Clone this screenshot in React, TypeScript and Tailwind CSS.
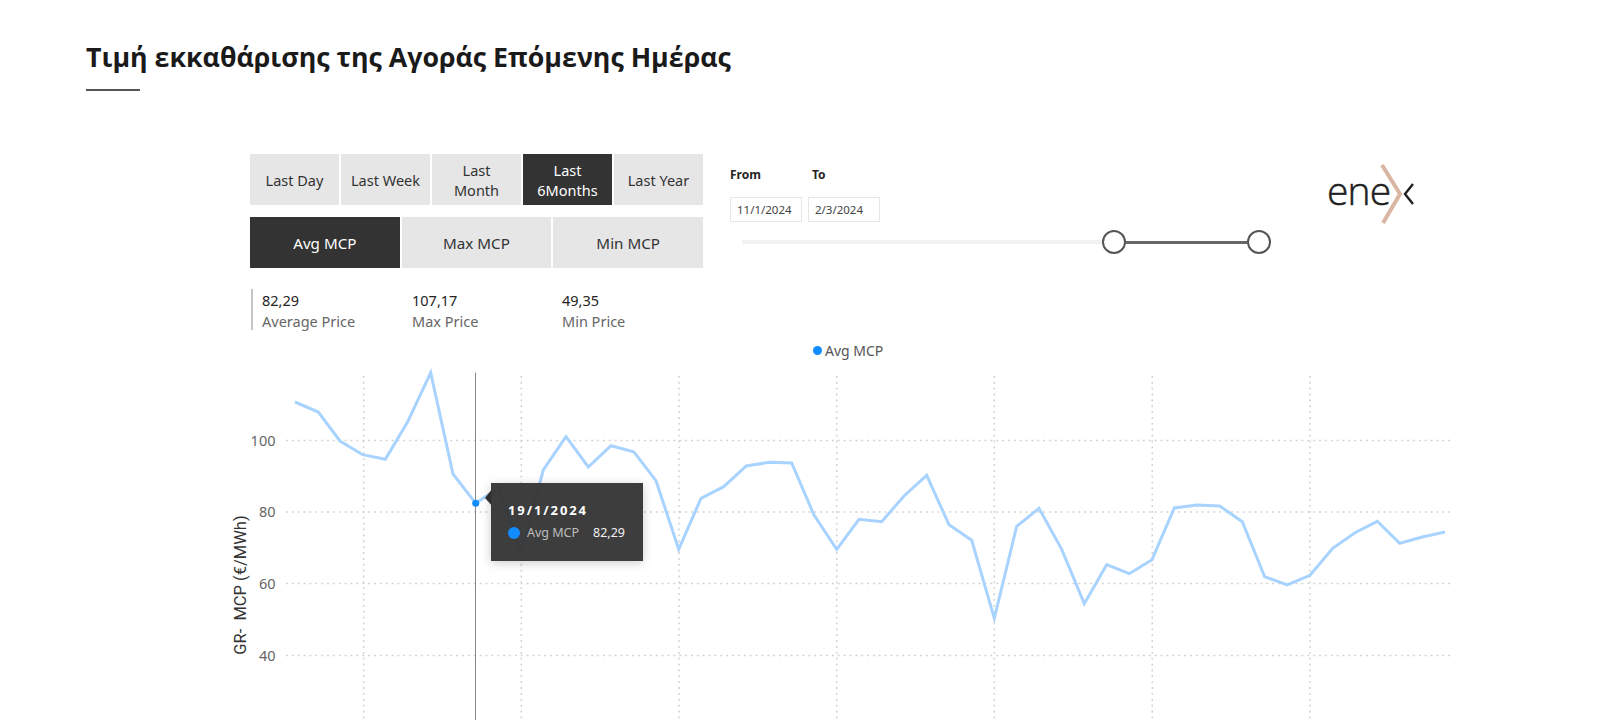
const points: [number, number][] = [
  [295, 402], [318.3, 412], [340, 441], [362.7, 454.7], [385.3, 459.3], [407.7, 421.7], [430.7, 372.7], [453, 474], [475.7, 503.3],
  [498.3, 488], [520.9, 553], [543.3, 470], [566, 436.7], [588.3, 467], [611, 445.7], [633.7, 451.7], [656, 480.7], [678.7, 549.3],
  [701, 498.3], [723.7, 486.7], [746.3, 466], [769, 462.3], [791.7, 463], [814, 515], [836.7, 549.3], [859, 519.3], [881.7, 521.7],
  [904, 496], [926.7, 475.3], [949, 524.7], [971.7, 540.3], [994.3, 618.3], [1016.7, 526.3], [1039, 508.3], [1061.7, 549.3],
  [1084.3, 603.7], [1106.7, 564.7], [1129.3, 573.7], [1152, 559.7], [1174.3, 508], [1197, 505], [1219.7, 506], [1242.3, 521.7],
  [1264.7, 576.7], [1287.3, 585], [1310, 575.3], [1332.7, 548.3], [1355, 532.7], [1377.3, 521.3], [1399.7, 543.3], [1422.3, 537], [1445, 532],
];

const rows = [
  { y: 440.5, label: "100" },
  { y: 512, label: "80" },
  { y: 583.5, label: "60" },
  { y: 655.5, label: "40" },
];
const columns = [363.7, 521.3, 679, 836.7, 994.3, 1152.3, 1310];

function PeriodButton({ label, active, large }: { label: string; active?: boolean; large?: boolean }) {
  return (
    <div
      className={`flex items-center justify-center px-[8px] text-center leading-[20px] ${large ? "text-[15.2px]" : "text-[14.5px]"} ${
        active ? "bg-[#333333] text-white" : "bg-[#e6e6e6] text-[#333333]"
      }`}
    >
      {label}
    </div>
  );
}

function Stat({ value, label }: { value: string; label: string }) {
  return (
    <div className="w-[150px] shrink-0 text-[14.5px] leading-[21px]">
      <div className="text-[#252423]">{value}</div>
      <div className="text-[#666666]">{label}</div>
    </div>
  );
}

function Logo() {
  return (
    <svg width="92" height="62" viewBox="1326 163 92 62" className="mt-[9px] ml-[55px]">
      <text
        x="1327"
        y="205"
        fontSize="39"
        fontFamily="'Open Sans', sans-serif"
        fontWeight="300"
        letterSpacing="-0.8"
        fill="#1f1f1f"
        stroke="#1f1f1f"
        strokeWidth="0.5"
      >
        ene
      </text>
      <path d="M1382 165 L1400 194 L1383 223" fill="none" stroke="#d9b5a3" strokeWidth="4" />
      <path d="M1413 184 L1405 194 L1413 204" fill="none" stroke="#1f1f1f" strokeWidth="2.4" />
    </svg>
  );
}

function Chart() {
  return (
    <div className="relative ml-[220px] w-[1240px] h-[359px]">
      <svg width="1240" height="359" viewBox="220 361 1240 359" className="block">
        {rows.map((r) => (
          <line key={r.y} x1="286" x2="1453" y1={r.y} y2={r.y} stroke="#cfcfcf" strokeWidth="1.5" strokeDasharray="1.8 4.07" />
        ))}
        {columns.map((x) => (
          <line key={x} x1={x} x2={x} y1="376" y2="720" stroke="#cfcfcf" strokeWidth="1.5" strokeDasharray="1.8 4.07" />
        ))}
        {rows.map((r) => (
          <text key={r.label} x="275.5" y={r.y + 5} textAnchor="end" fontSize="14.5" fontFamily="'Noto Sans', sans-serif" fill="#666666">
            {r.label}
          </text>
        ))}
        <text
          transform="translate(245.5 585) rotate(-90)"
          textAnchor="middle"
          fontSize="16.5"
          fontFamily="Roboto, sans-serif"
          fill="#333333"
        >
          {"GR-\u00a0 MCP (€/MWh)"}
        </text>
        <polyline points={points.map((p) => p.join(",")).join(" ")} fill="none" stroke="#a9d3ff" strokeWidth="3" strokeLinejoin="miter" />
        <line x1="475.5" x2="475.5" y1="372.7" y2="720" stroke="#8a8a8a" strokeWidth="1" />
        <circle cx="475.7" cy="503.3" r="3.5" fill="#118dff" />
        <polygon points="491.3,490 485,498 491.3,505" fill="#333333" />
      </svg>
      <div className="absolute left-[271px] top-[122px] w-[152px] h-[78px] bg-[#333333]/95 pt-[18px] pl-[17px] shadow-[0_2px_10px_rgba(0,0,0,0.2)]">
        <div className="text-[13px] leading-[18px] font-bold tracking-[1.9px] text-white">19/1/2024</div>
        <div className="mt-[4px] flex items-center h-[20px] text-[12.5px]">
          <span className="w-[12px] h-[12px] rounded-full bg-[#118dff]" />
          <span className="ml-[7px] w-[66px] text-[#bdbdbd]">Avg MCP</span>
          <span className="text-[#f2f2f2]">82,29</span>
        </div>
      </div>
    </div>
  );
}

export default function App() {
  return (
    <div className="h-[720px] overflow-hidden bg-white font-['Noto_Sans',sans-serif]">
      <header className="pl-[86px] pt-[39px]">
        <h1 className="font-['Open_Sans',sans-serif] text-[26.75px] leading-[36px] font-bold text-[#1a1a1a]">
          Τιμή εκκαθάρισης της Αγοράς Επόμενης Ημέρας
        </h1>
        <div className="mt-[14px] w-[54px] h-[2px] bg-[#555555]" />
      </header>

      <section className="mt-[63px] ml-[250px] flex h-[176px]">
        <div className="w-[453px]">
          <div className="grid grid-cols-5 gap-x-[2px] h-[51px]">
            <PeriodButton label="Last Day" />
            <PeriodButton label="Last Week" />
            <PeriodButton label="Last Month" />
            <PeriodButton label="Last 6Months" active />
            <PeriodButton label="Last Year" />
          </div>
          <div className="mt-[12px] grid grid-cols-3 gap-x-[2px] h-[51px]">
            <PeriodButton label="Avg MCP" active large />
            <PeriodButton label="Max MCP" large />
            <PeriodButton label="Min MCP" large />
          </div>
          <div className="mt-[21px] ml-[1px] flex h-[41px] border-l-2 border-[#c8c6c4] pl-[9px] pt-[1px]">
            <Stat value="82,29" label="Average Price" />
            <Stat value="107,17" label="Max Price" />
            <Stat value="49,35" label="Min Price" />
          </div>
        </div>

        <div className="ml-[27px] w-[541px] pt-[11px]">
          <div className="flex h-[20px] items-center text-[12px] font-bold text-[#252423]">
            <span className="w-[82px]">From</span>
            <span>To</span>
          </div>
          <div className="mt-[12px] flex gap-x-[6px]">
            <div className="w-[72px] h-[25px] border border-[#e6e6e6] pl-[6px] text-[11.5px] leading-[23px] text-[#444444]">11/1/2024</div>
            <div className="w-[72px] h-[25px] border border-[#e6e6e6] pl-[6px] text-[11.5px] leading-[23px] text-[#444444]">2/3/2024</div>
          </div>
          <div className="mt-[8px] ml-[12px] flex items-center">
            <div className="w-[360px] h-[4px] bg-[#f2f2f2]" />
            <div className="w-[24px] h-[24px] rounded-full border-2 border-[#555555] bg-white" />
            <div className="w-[121px] h-[3px] bg-[#666666]" />
            <div className="w-[24px] h-[24px] rounded-full border-2 border-[#555555] bg-white" />
          </div>
        </div>

        <Logo />
      </section>

      <div className="mt-[10px] ml-[813px] flex h-[20px] items-center text-[14px] text-[#555555]">
        <span className="w-[9px] h-[9px] rounded-full bg-[#118dff]" />
        <span className="ml-[3px]">Avg MCP</span>
      </div>

      <div className="h-[1px]" />
      <Chart />
    </div>
  );
}
